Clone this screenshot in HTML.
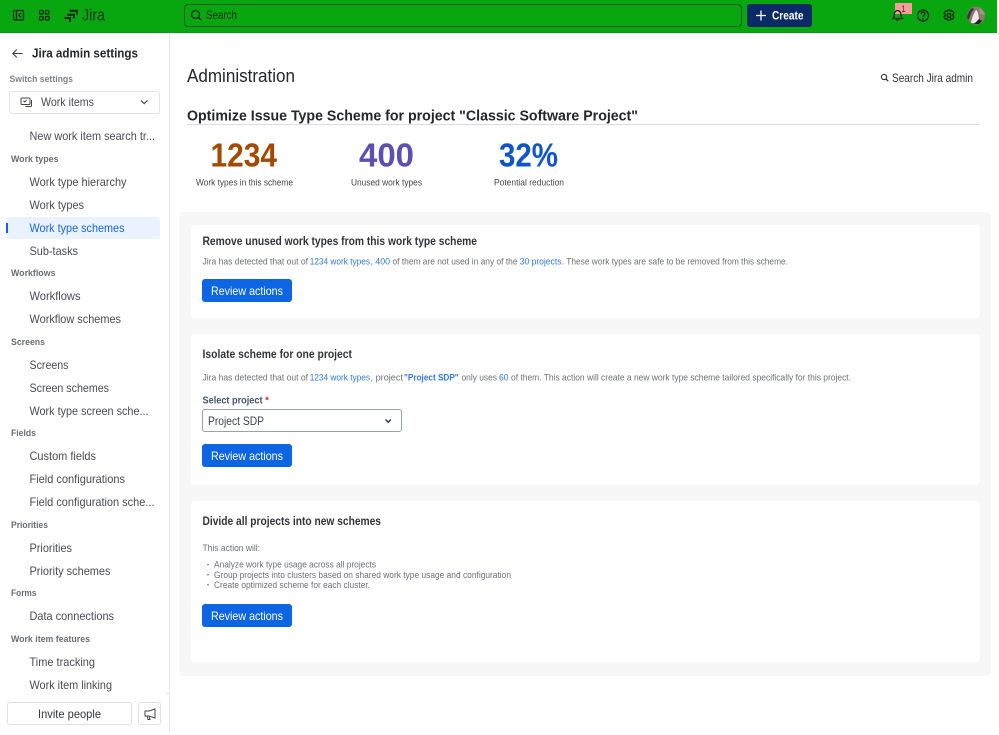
<!DOCTYPE html>
<html lang="en"><head><meta charset="utf-8"><title>Jira admin settings</title>
<style>
html,body{margin:0;padding:0;background:#fff;width:999px;height:735px;overflow:hidden}
.b{position:absolute;box-sizing:border-box}
svg.o{position:absolute;left:0;top:0}
text{font-family:"Liberation Sans",sans-serif}
.side{font-size:11.800px;fill:#4a4c52}
.sec{font-size:9.600px;font-weight:700;fill:#6a6d74}
.p{font-size:9.200px;fill:#6d7078}
.l{font-size:9.200px;fill:#2f7ae5}
.h{font-size:11.600px;font-weight:700;fill:#33353a}
.btn{font-size:11.800px;fill:#fff}
.lab{font-size:9.600px;fill:#44464c}
.num{font-size:33px;font-weight:700}
</style></head><body>
<div class="b" style="left:0;top:0;width:997px;height:33px;background:#09a70f;border-bottom:1px solid #0b9a10"></div>
<div class="b" style="left:184px;top:4px;width:558px;height:23px;border:1px solid #0a5c10;border-radius:4px"></div>
<div class="b" style="left:747px;top:4px;width:65px;height:23px;background:#0c2b66;border-radius:3px"></div>
<div class="b" style="left:895px;top:3px;width:17px;height:11px;background:#fb9b9b"></div>
<div class="b" style="left:169px;top:33px;width:1px;height:699px;background:#e8e8e8"></div>
<div class="b" style="left:166px;top:693px;width:3px;height:1px;background:#e4e4e4"></div>
<div class="b" style="left:9px;top:91px;width:151px;height:23px;border:1px solid #e2e3e5;border-radius:3px"></div>
<div class="b" style="left:6px;top:217px;width:154px;height:22px;background:#e9f2fe;border-radius:3px"></div>
<div class="b" style="left:6px;top:223px;width:2px;height:10px;background:#1868db"></div>
<div class="b" style="left:7px;top:702px;width:125px;height:23px;border:1px solid #dfe0e3;border-radius:3px"></div>
<div class="b" style="left:138px;top:702px;width:23px;height:23px;border:1px solid #dfe0e3;border-radius:3px"></div>
<div class="b" style="left:187px;top:124px;width:793px;height:1px;background:#dcdde0"></div>
<div class="b" style="left:179px;top:212px;width:812px;height:464px;background:#f7f7f8;border-radius:4px"></div>
<div class="b" style="left:191px;top:225px;width:789px;height:93px;background:#fff;border-radius:4px"></div>
<div class="b" style="left:191px;top:334px;width:789px;height:151px;background:#fff;border-radius:4px"></div>
<div class="b" style="left:191px;top:501px;width:789px;height:161px;background:#fff;border-radius:4px"></div>
<div class="b" style="left:202px;top:279px;width:90px;height:23px;background:#0c66e4;border-radius:3px"></div>
<div class="b" style="left:202px;top:444px;width:90px;height:23px;background:#0c66e4;border-radius:3px"></div>
<div class="b" style="left:202px;top:604px;width:90px;height:23px;background:#0c66e4;border-radius:3px"></div>
<div class="b" style="left:202px;top:409px;width:200px;height:23px;background:#fff;border:1px solid #9aa1ae;border-radius:3px"></div>
<svg class="o" width="999" height="735" viewBox="0 0 999 735" xmlns="http://www.w3.org/2000/svg">
<!-- header icons -->
<g fill="none" stroke="#0b2a12" stroke-width="1.300">
<rect x="13.500" y="10.500" width="10" height="9.500" rx="1"/><path d="M16.500 10.500V20M21 13l-2 2.200 2 2.200"/>
<rect x="39.500" y="10.500" width="3.600" height="3.600" rx="1"/><rect x="45.500" y="10.500" width="3.600" height="3.600" rx="1"/><rect x="39.500" y="16.500" width="3.600" height="3.600" rx="1"/><rect x="45.500" y="16.500" width="3.600" height="3.600" rx="1"/>
<circle cx="195.500" cy="14.500" r="4"/><path d="M198.500 17.500l2.700 2.700"/>
<path d="M893 18.500c1-1 1.200-2 1.200-4 0-2.200 1.500-4 3.400-4s3.400 1.800 3.400 4c0 2 .3 3 1.300 4zM896 19.500c.5 1 2.500 1 3 0"/>
<circle cx="923" cy="15.500" r="5.500"/><path d="M921.200 13.800c0-2.300 3.700-2.300 3.700 0 0 1.400-1.800 1.400-1.800 2.800"/>
<circle cx="949" cy="15.500" r="1.900"/><path d="M947.600 10h2.800l.5 1.500 1.500-.6 1.500 2.300-1.100 1.200v1.300l1.100 1.200-1.500 2.300-1.500-.6-.5 1.500h-2.800l-.5-1.500-1.500.6-1.500-2.300 1.100-1.200v-1.300l-1.100-1.200 1.500-2.300 1.500.6z"/>
</g>
<circle cx="923" cy="18.800" r=".8" fill="#0b2a12"/>
<path d="M69.500 10.800H77V14.500M67 14.800H74V18.200M64.500 18H70V22" fill="none" stroke="#0b2412" stroke-width="2"/>
<text x="82" y="20.500" font-size="16.500" fill="#15351c" textLength="23" lengthAdjust="spacingAndGlyphs">Jira</text>
<text x="206" y="19" font-size="11.500" fill="#0d2d13" textLength="31" lengthAdjust="spacingAndGlyphs">Search</text>
<path d="M761 10.500v10M756 15.500h10" stroke="#fff" stroke-width="1.300" fill="none"/>
<text x="772" y="19.300" font-size="11.500" font-weight="700" fill="#fff" textLength="31.500" lengthAdjust="spacingAndGlyphs">Create</text>
<text x="901.500" y="12" font-size="9.500" fill="#4a2222" textLength="4" lengthAdjust="spacingAndGlyphs">1</text>
<circle cx="976" cy="15.500" r="9" fill="#8b7a72"/>
<path d="M971 23c1-6 3-10 5-13 2 1 3 6 3 13z" fill="#eee8e6"/><path d="M969 20c1-3 2-8 5-11l-2-1c-3 2-5 7-5 10z" fill="#3e3a3c"/><path d="M974 24l5-5 3 2-3 3z" fill="#252528"/><path d="M979 8c2 1 5 3 6 7l-5-1z" fill="#b08f80"/>
<!-- sidebar -->
<path d="M22.500 53.500H13M16.800 49.500l-4 4 4 4" fill="none" stroke="#3a3c42" stroke-width="1.100"/>
<text x="32" y="57.300" font-size="12.500" font-weight="700" fill="#24262b" textLength="106" lengthAdjust="spacingAndGlyphs">Jira admin settings</text>
<text x="9.500" y="82" font-size="9.600" font-weight="700" fill="#7f8289" textLength="63.500" lengthAdjust="spacingAndGlyphs">Switch settings</text>
<g fill="none" stroke="#44464c" stroke-width="1"><rect x="21" y="98" width="9" height="6.500" rx="1"/><path d="M23.500 100.800l1.200 1.200 2-2M31.500 100v5.500a1 1 0 0 1-1 1h-5"/><path d="M141 100.500l3.200 3.200 3.200-3.200" stroke-width="1.200"/></g>
<text x="41" y="106" class="side" textLength="53" lengthAdjust="spacingAndGlyphs">Work items</text>
<text x="29.500" y="140" class="side" textLength="125.500" lengthAdjust="spacingAndGlyphs">New work item search tr...</text>
<text x="11" y="162" class="sec" textLength="47.500" lengthAdjust="spacingAndGlyphs">Work types</text>
<text x="29.500" y="186" class="side" textLength="97" lengthAdjust="spacingAndGlyphs">Work type hierarchy</text>
<text x="29.500" y="209" class="side" textLength="54.500" lengthAdjust="spacingAndGlyphs">Work types</text>
<text x="29.500" y="232" class="side" style="fill:#1868db" textLength="95" lengthAdjust="spacingAndGlyphs">Work type schemes</text>
<text x="29.500" y="255" class="side" textLength="48.500" lengthAdjust="spacingAndGlyphs">Sub-tasks</text>
<text x="11" y="276" class="sec" textLength="44.500" lengthAdjust="spacingAndGlyphs">Workflows</text>
<text x="29.500" y="300" class="side" textLength="51" lengthAdjust="spacingAndGlyphs">Workflows</text>
<text x="29.500" y="323" class="side" textLength="91.500" lengthAdjust="spacingAndGlyphs">Workflow schemes</text>
<text x="11" y="345" class="sec" textLength="34" lengthAdjust="spacingAndGlyphs">Screens</text>
<text x="29.500" y="369" class="side" textLength="39" lengthAdjust="spacingAndGlyphs">Screens</text>
<text x="29.500" y="392" class="side" textLength="79.500" lengthAdjust="spacingAndGlyphs">Screen schemes</text>
<text x="29.500" y="415" class="side" textLength="119" lengthAdjust="spacingAndGlyphs">Work type screen sche...</text>
<text x="11" y="436" class="sec" textLength="25" lengthAdjust="spacingAndGlyphs">Fields</text>
<text x="29.500" y="460" class="side" textLength="66.500" lengthAdjust="spacingAndGlyphs">Custom fields</text>
<text x="29.500" y="483" class="side" textLength="95.500" lengthAdjust="spacingAndGlyphs">Field configurations</text>
<text x="29.500" y="506" class="side" textLength="125" lengthAdjust="spacingAndGlyphs">Field configuration sche...</text>
<text x="11" y="528" class="sec" textLength="37" lengthAdjust="spacingAndGlyphs">Priorities</text>
<text x="29.500" y="552" class="side" textLength="42.500" lengthAdjust="spacingAndGlyphs">Priorities</text>
<text x="29.500" y="575" class="side" textLength="81" lengthAdjust="spacingAndGlyphs">Priority schemes</text>
<text x="11" y="596" class="sec" textLength="25.500" lengthAdjust="spacingAndGlyphs">Forms</text>
<text x="29.500" y="620" class="side" textLength="84.500" lengthAdjust="spacingAndGlyphs">Data connections</text>
<text x="11" y="642" class="sec" textLength="79" lengthAdjust="spacingAndGlyphs">Work item features</text>
<text x="29.500" y="666" class="side" textLength="65.500" lengthAdjust="spacingAndGlyphs">Time tracking</text>
<text x="29.500" y="689" class="side" textLength="82.500" lengthAdjust="spacingAndGlyphs">Work item linking</text>
<text x="38" y="718" class="side" style="fill:#33353a" textLength="63" lengthAdjust="spacingAndGlyphs">Invite people</text>
<path d="M155 709v9l-6-2h-4v-5h4zM147 716l1 3.500h2l-1-3" fill="none" stroke="#44464c" stroke-width="1"/>
<!-- main -->
<text x="187" y="82" font-size="18.500" fill="#25272c" textLength="108" lengthAdjust="spacingAndGlyphs">Administration</text>
<circle cx="884" cy="77" r="2.600" fill="none" stroke="#33353a" stroke-width="1.100"/><path d="M886 79l2.200 2.200" stroke="#33353a" stroke-width="1.300"/>
<text x="892" y="82" font-size="11.800" fill="#33353a" textLength="81" lengthAdjust="spacingAndGlyphs">Search Jira admin</text>
<text x="187" y="120.500" font-size="15.200" font-weight="700" fill="#25272c" textLength="451" lengthAdjust="spacingAndGlyphs">Optimize Issue Type Scheme for project "Classic Software Project"</text>
<text x="210.500" y="166.500" class="num" fill="#a54800" textLength="66.500" lengthAdjust="spacingAndGlyphs">1234</text>
<text x="359" y="166.500" class="num" fill="#5e4db2" textLength="55" lengthAdjust="spacingAndGlyphs">400</text>
<text x="499" y="166.500" class="num" fill="#0c55cf" textLength="59" lengthAdjust="spacingAndGlyphs">32%</text>
<text x="196" y="185.300" class="lab" textLength="97" lengthAdjust="spacingAndGlyphs">Work types in this scheme</text>
<text x="351" y="185.300" class="lab" textLength="71" lengthAdjust="spacingAndGlyphs">Unused work types</text>
<text x="494" y="185.300" class="lab" textLength="70" lengthAdjust="spacingAndGlyphs">Potential reduction</text>
<!-- card 1 -->
<text x="202.500" y="245" class="h" textLength="274.500" lengthAdjust="spacingAndGlyphs">Remove unused work types from this work type scheme</text>
<text x="202.500" y="264.700" class="p" textLength="105.500" lengthAdjust="spacingAndGlyphs">Jira has detected that out of</text>
<text x="309.700" y="264.700" class="l" textLength="60.300" lengthAdjust="spacingAndGlyphs">1234 work types</text>
<text x="370.500" y="264.700" class="p">,</text>
<text x="375.300" y="264.700" class="l" textLength="14.700" lengthAdjust="spacingAndGlyphs">400</text>
<text x="392.500" y="264.700" class="p" textLength="125" lengthAdjust="spacingAndGlyphs">of them are not used in any of the</text>
<text x="519.700" y="264.700" class="l" textLength="41.800" lengthAdjust="spacingAndGlyphs">30 projects</text>
<text x="561.800" y="264.700" class="p" textLength="226.200" lengthAdjust="spacingAndGlyphs">. These work types are safe to be removed from this scheme.</text>
<text x="211" y="295" class="btn" textLength="72" lengthAdjust="spacingAndGlyphs">Review actions</text>
<!-- card 2 -->
<text x="202.500" y="358" class="h" textLength="149.500" lengthAdjust="spacingAndGlyphs">Isolate scheme for one project</text>
<text x="202.500" y="380.700" class="p" textLength="105.500" lengthAdjust="spacingAndGlyphs">Jira has detected that out of</text>
<text x="309.700" y="380.700" class="l" textLength="60.300" lengthAdjust="spacingAndGlyphs">1234 work types</text>
<text x="370.500" y="380.700" class="p" textLength="32.500" lengthAdjust="spacingAndGlyphs">, project</text>
<text x="404" y="380.700" class="l" font-weight="700" textLength="54.700" lengthAdjust="spacingAndGlyphs">"Project SDP"</text>
<text x="461.500" y="380.700" class="p" textLength="35.500" lengthAdjust="spacingAndGlyphs">only uses</text>
<text x="499" y="380.700" class="l" textLength="9.500" lengthAdjust="spacingAndGlyphs">60</text>
<text x="511" y="380.700" class="p" textLength="340" lengthAdjust="spacingAndGlyphs">of them. This action will create a new work type scheme tailored specifically for this project.</text>
<text x="202.500" y="403.700" font-size="10" font-weight="700" fill="#44546f" textLength="60" lengthAdjust="spacingAndGlyphs">Select project</text>
<text x="265" y="403.700" font-size="10" font-weight="700" fill="#c9372c">*</text>
<text x="208" y="425" font-size="11.800" fill="#3a4558" textLength="56" lengthAdjust="spacingAndGlyphs">Project SDP</text>
<path d="M385.500 419.500l2.700 2.700 2.700-2.700" fill="none" stroke="#33405a" stroke-width="1.500"/>
<text x="211" y="460" class="btn" textLength="72" lengthAdjust="spacingAndGlyphs">Review actions</text>
<!-- card 3 -->
<text x="202.500" y="525" class="h" textLength="178.500" lengthAdjust="spacingAndGlyphs">Divide all projects into new schemes</text>
<text x="202.500" y="551" class="p" textLength="57.500" lengthAdjust="spacingAndGlyphs">This action will:</text>
<circle cx="208" cy="564.500" r=".8" fill="#62666e"/><circle cx="208" cy="574.800" r=".8" fill="#62666e"/><circle cx="208" cy="584.800" r=".8" fill="#62666e"/>
<text x="214" y="567.700" class="p" textLength="162" lengthAdjust="spacingAndGlyphs">Analyze work type usage across all projects</text>
<text x="214" y="578" class="p" textLength="297" lengthAdjust="spacingAndGlyphs">Group projects into clusters based on shared work type usage and configuration</text>
<text x="214" y="588" class="p" textLength="156" lengthAdjust="spacingAndGlyphs">Create optimized scheme for each cluster.</text>
<text x="211" y="620" class="btn" textLength="72" lengthAdjust="spacingAndGlyphs">Review actions</text>
</svg>
</body></html>
